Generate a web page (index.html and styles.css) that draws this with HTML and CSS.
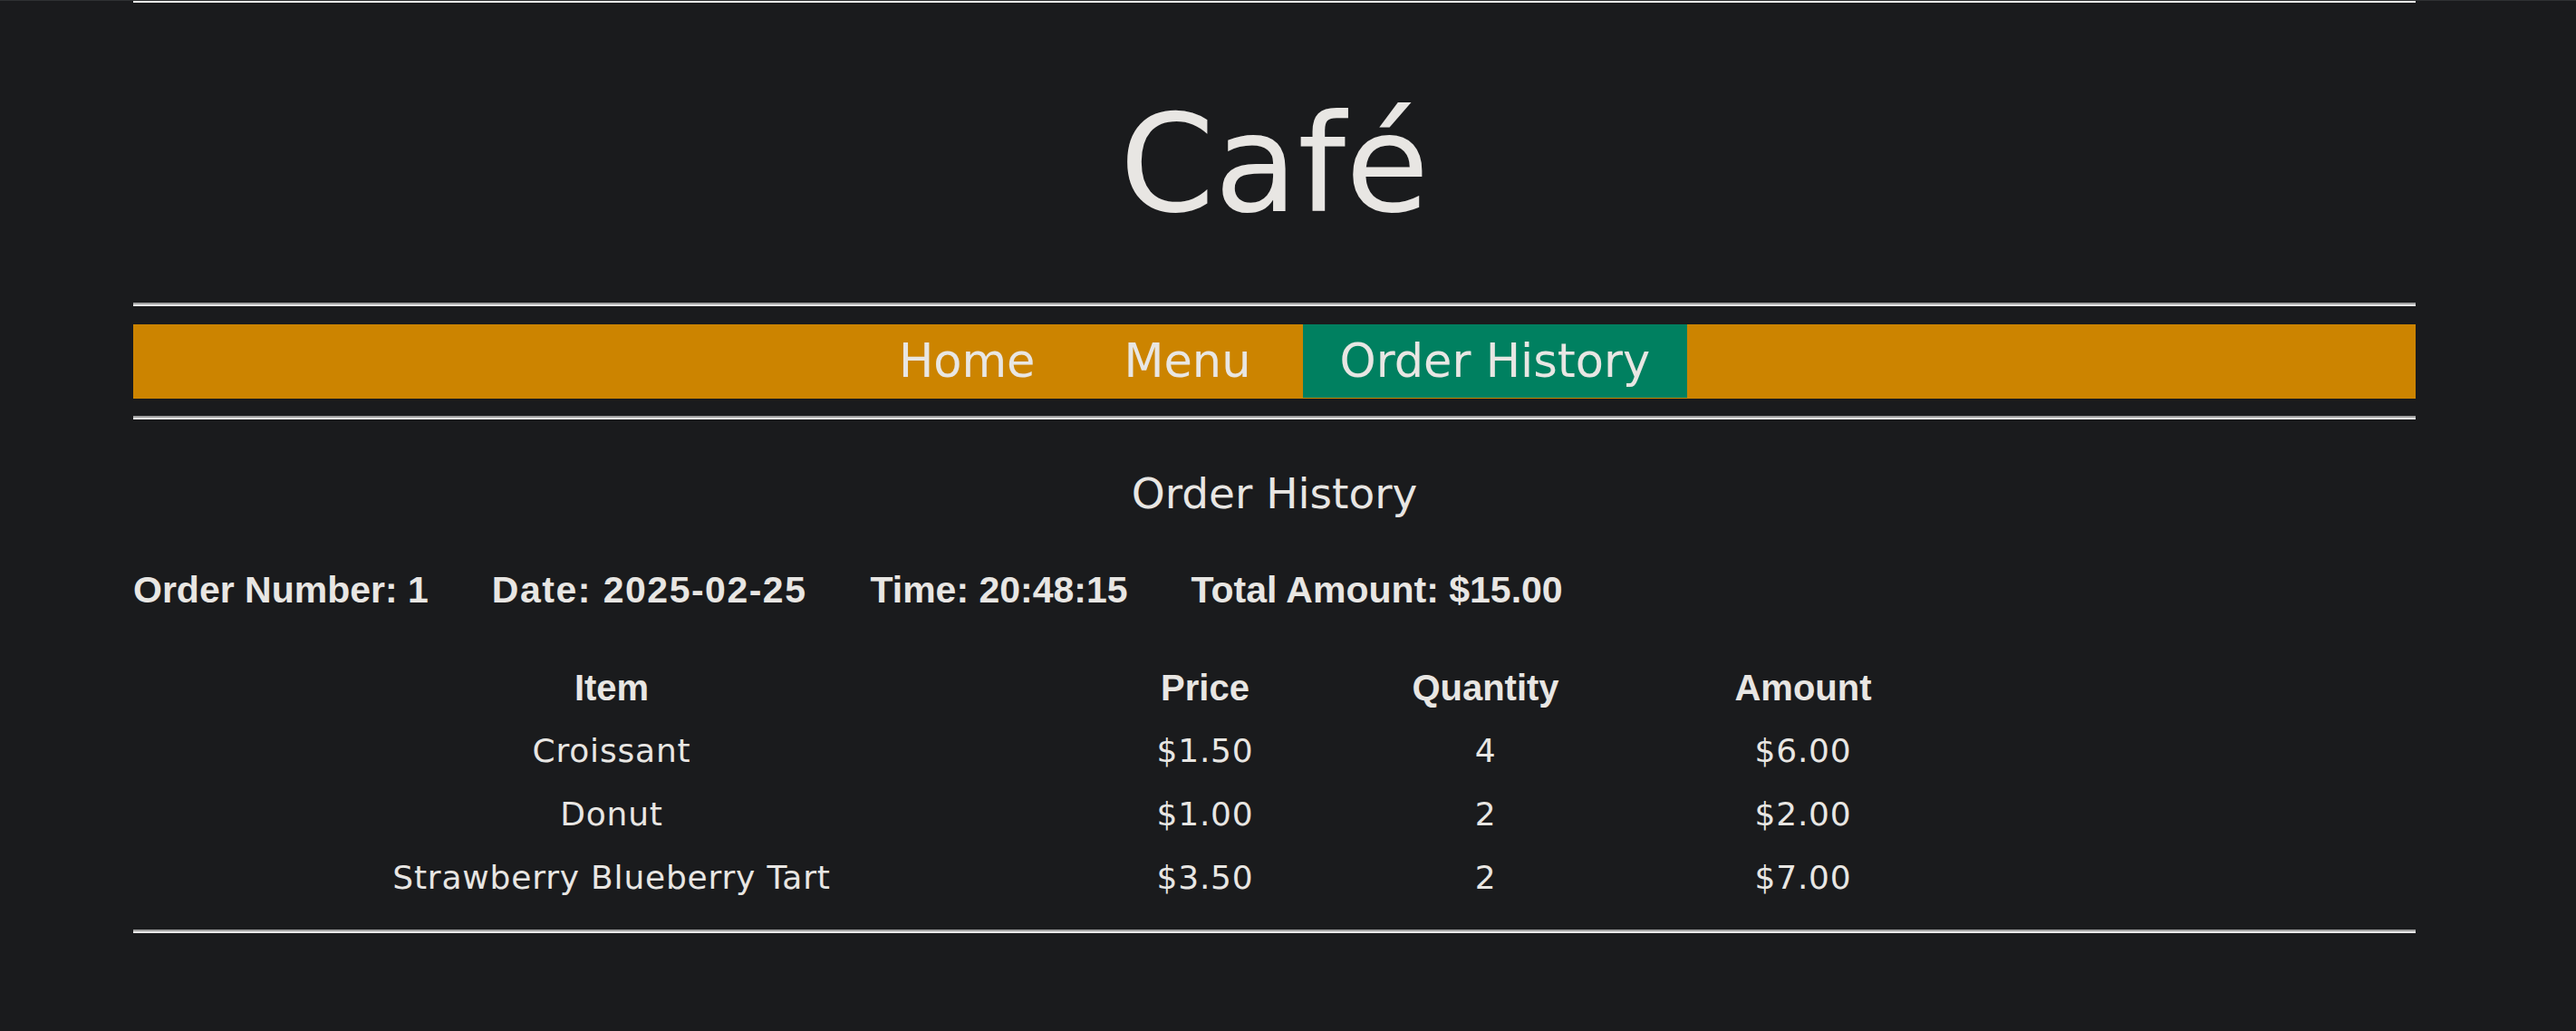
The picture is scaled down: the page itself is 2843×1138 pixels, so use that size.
FILE: index.html
```html
<!DOCTYPE html>
<html lang="en">
<head>
<meta charset="utf-8">
<title>Café – Order History</title>
<link rel="stylesheet" href="styles.css">
</head>
<body>
<div class="page">
  <hr class="rule rule-top">
  <h1 class="title">Café</h1>
  <hr class="rule rule-nav-top">
  <nav class="nav">
    <a class="nav-item" href="#">Home</a>
    <a class="nav-item" href="#">Menu</a>
    <a class="nav-item active" href="#">Order History</a>
  </nav>
  <hr class="rule rule-nav-bottom">
  <h2 class="subtitle">Order History</h2>
  <div class="order-info">
    <span>Order Number: 1</span>
    <span class="info-date">Date: 2025-02-25</span>
    <span>Time: 20:48:15</span>
    <span>Total Amount: $15.00</span>
  </div>
  <table class="items">
    <colgroup>
      <col class="c-item">
      <col class="c-price">
      <col class="c-qty">
      <col class="c-amount">
    </colgroup>
    <thead>
      <tr><th>Item</th><th>Price</th><th>Quantity</th><th>Amount</th></tr>
    </thead>
    <tbody>
      <tr><td>Croissant</td><td>$1.50</td><td>4</td><td>$6.00</td></tr>
      <tr><td>Donut</td><td>$1.00</td><td>2</td><td>$2.00</td></tr>
      <tr><td>Strawberry Blueberry Tart</td><td>$3.50</td><td>2</td><td>$7.00</td></tr>
    </tbody>
  </table>
  <hr class="rule rule-end">
</div>
</body>
</html>
```
FILE: styles.css
```css
html, body {
  margin: 0;
  padding: 0;
  background: #1a1b1d;
}

body {
  border-top: 1px solid #2f3133;
  color: #e8e6e3;
  font-family: "DejaVu Sans", "Noto Sans", sans-serif;
}

.page {
  margin-left: 147px;
  width: 2519px;
}

.rule {
  display: block;
  margin: 0;
  height: 0;
  border: 0;
  border-top: 2px solid #a2a2a2;
  border-bottom: 2px solid #e9e9e9;
}

.rule-top {
  border-top: 0;
}

.title {
  margin: 88px 0 0;
  height: 180px;
  line-height: 180px;
  font-size: 150px;
  font-weight: normal;
  text-align: center;
  font-family: "Comic Sans MS", "DejaVu Sans", sans-serif;
}

.rule-nav-top {
  margin-top: 63px;
}

.nav {
  margin-top: 20px;
  height: 82px;
  background: #cc8400;
  display: flex;
  justify-content: center;
  align-items: flex-start;
  gap: 16px;
}

.nav-item {
  display: block;
  height: 81px;
  line-height: 81px;
  padding: 0 41px;
  font-size: 51px;
  color: #e8e6e3;
  text-decoration: none;
}

.nav-item.active {
  background: #008060;
}

.rule-nav-bottom {
  margin-top: 19px;
}

.subtitle {
  margin: 52px 0 0;
  height: 60px;
  line-height: 60px;
  font-size: 47px;
  font-weight: normal;
  text-align: center;
  font-family: "Comic Sans MS", "DejaVu Sans", sans-serif;
}

.order-info {
  margin-top: 46px;
  height: 60px;
  line-height: 60px;
  display: flex;
  gap: 70px;
  font-family: "Liberation Sans", Arial, sans-serif;
  font-weight: bold;
  font-size: 41px;
  white-space: nowrap;
}

.info-date {
  letter-spacing: 1.5px;
}

.items {
  margin-top: 43px;
  border-collapse: collapse;
  border-spacing: 0;
  table-layout: fixed;
  width: 2011px;
}

.c-item { width: 1056px; }
.c-price { width: 254px; }
.c-qty { width: 365px; }
.c-amount { width: 336px; }

.items th,
.items td {
  padding: 0;
  height: 70px;
  line-height: 70px;
  text-align: center;
  white-space: nowrap;
}

.items th {
  font-family: "Liberation Sans", Arial, sans-serif;
  font-weight: bold;
  font-size: 40px;
}

.items td {
  font-size: 36px;
  letter-spacing: 0.8px;
}

.rule-end {
  margin-top: 22px;
}
```
